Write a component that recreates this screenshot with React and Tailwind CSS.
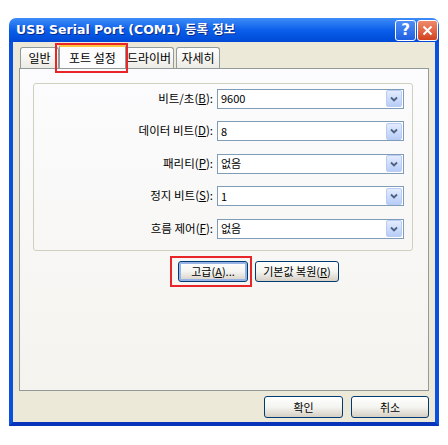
import React from 'react';

const rows = [
  { label: '비트/초', key: 'B', value: '9600' },
  { label: '데이터 비트', key: 'D', value: '8' },
  { label: '패리티', key: 'P', value: '없음' },
  { label: '정지 비트', key: 'S', value: '1' },
  { label: '흐름 제어', key: 'F', value: '없음' },
];

const tabs = [
  { t: '일반', w: 'w-[39px]' },
  { t: '포트 설정', w: 'w-[67px]' },
  { t: '드라이버', w: 'w-[50px]' },
  { t: '자세히', w: 'w-[44px]' },
];

const font = { fontFamily: '"Noto Sans CJK KR", "DejaVu Sans", sans-serif' };

const Arrow = () => (
  <div className="w-[16px] h-[17px] mr-[1px] rounded-[2px] border border-[#b9ccf5] bg-gradient-to-b from-[#e3ecfd] to-[#b8cdf7] flex items-center justify-center">
    <svg width="8" height="6" viewBox="0 0 8 6">
      <path d="M1 1.5 L4 4.5 L7 1.5" stroke="#4d6185" strokeWidth="1.8" fill="none" />
    </svg>
  </div>
);

const XpButton = ({ children, className = '', focused }) => (
  <div
    className={`h-[21px] rounded-[3px] border border-[#003c74] bg-gradient-to-b from-[#ffffff] via-[#f4f4f0] to-[#d6d0c5] flex items-center justify-center text-[11px] text-black ${
      focused ? 'shadow-[inset_0_0_0_2px_#98b4e6]' : ''
    } ${className}`}
  >
    {children}
  </div>
);

export default function App() {
  return (
    <div className="w-[448px] h-[445px] bg-white pt-[18px] pl-[9px]" style={font}>
      <div className="w-[430px] h-[408px] flex flex-col">
        {/* title bar */}
        <div className="h-[24px] rounded-t-[7px] bg-gradient-to-b from-[#3d8cf7] via-[#0a5fea] to-[#0049d6] flex items-center pl-[7px] pr-[1px]">
          <span
            className="text-white text-[12.5px] font-bold flex-1 [text-shadow:1px_1px_0_#0a2a8a]"
            style={{ fontFamily: '"DejaVu Sans", "Noto Sans CJK KR", sans-serif' }}
          >
            USB Serial Port (COM1) 등록 정보
          </span>
          <div className="w-[21px] h-[21px] rounded-[3px] border border-white bg-gradient-to-b from-[#4f8ef7] to-[#1f5fe0] flex items-center justify-center text-white font-bold text-[15px] leading-none mr-[1px]" style={{ fontFamily: '"DejaVu Sans", sans-serif' }}>
            ?
          </div>
          <div className="w-[21px] h-[21px] rounded-[3px] border border-white bg-gradient-to-b from-[#f08a6a] to-[#d1411c] flex items-center justify-center">
            <svg width="11" height="11" viewBox="0 0 11 11">
              <path d="M1.5 1.5 L9.5 9.5 M9.5 1.5 L1.5 9.5" stroke="white" strokeWidth="2" />
            </svg>
          </div>
        </div>

        {/* body */}
        <div className="flex-1 bg-[#ece9d8] border-x-[4px] border-b-[4px] border-x-[#0a4fe0] border-b-[#0734b8] flex flex-col px-[6px]">
          {/* tabs */}
          <div className="flex items-end h-[25px] mt-[1px] pl-[1px]">
            {tabs.map(({ t, w }, i) =>
              i === 1 ? (
                <div key={t} className={`relative h-[24px] -mx-[2px] z-10 bg-[#fcfcfe] border-x border-[#919b9c] border-t-[3px] border-t-[#ffc83c] rounded-t-[3px] text-[12px] flex items-center justify-center ${w}`}>
                  {t}
                  <div className="absolute -left-[5px] -top-[4px] w-[73px] h-[30px] border-2 border-[#e8262a]" />
                </div>
              ) : (
                <div key={t} className={`h-[21px] mr-[2px] bg-gradient-to-b from-white to-[#ecebe5] border border-b-0 border-[#919b9c] rounded-t-[3px] text-[12px] flex items-center justify-center ${w}`}>
                  {t}
                </div>
              )
            )}
          </div>

          {/* panel */}
          <div className="h-[323px] border border-[#919b9c] bg-gradient-to-b from-[#fcfcfe] to-[#f4f3ee] pt-[14px] pl-[13px]">
            <div className="w-[380px] h-[168px] border border-[#d0d0bf] rounded-[3px] flex flex-col pt-[5px] gap-[13.5px]">
              {rows.map((r) => (
                <div key={r.key} className="flex items-center h-[19px]">
                  <div className="w-[183px] text-right text-[11.5px] pr-[4px] text-black">
                    {r.label}(<span className="underline">{r.key}</span>):
                  </div>
                  <div className="w-[187px] h-[20px] border border-[#7f9db9] bg-white flex items-center">
                    <span className="flex-1 pl-[3px] text-[11px]">{r.value}</span>
                    <Arrow />
                  </div>
                </div>
              ))}
            </div>
            <div className="flex ml-[145px] mt-[10px] gap-[7px]">
              <div className="relative">
                <XpButton focused className="w-[70px]">
                  고급(<span className="underline">A</span>)...
                </XpButton>
                <div className="absolute -left-[8px] -top-[5px] w-[82px] h-[31px] border-2 border-[#e8262a]" />
              </div>
              <XpButton className="w-[84px]">
                기본값 복원(<span className="underline">R</span>)
              </XpButton>
            </div>
          </div>

          {/* footer */}
          <div className="flex justify-end gap-[8px] mt-[5px]">
            <XpButton className="w-[79px] h-[22px]">확인</XpButton>
            <XpButton className="w-[78px] h-[22px]">취소</XpButton>
          </div>
        </div>
      </div>
    </div>
  );
}
